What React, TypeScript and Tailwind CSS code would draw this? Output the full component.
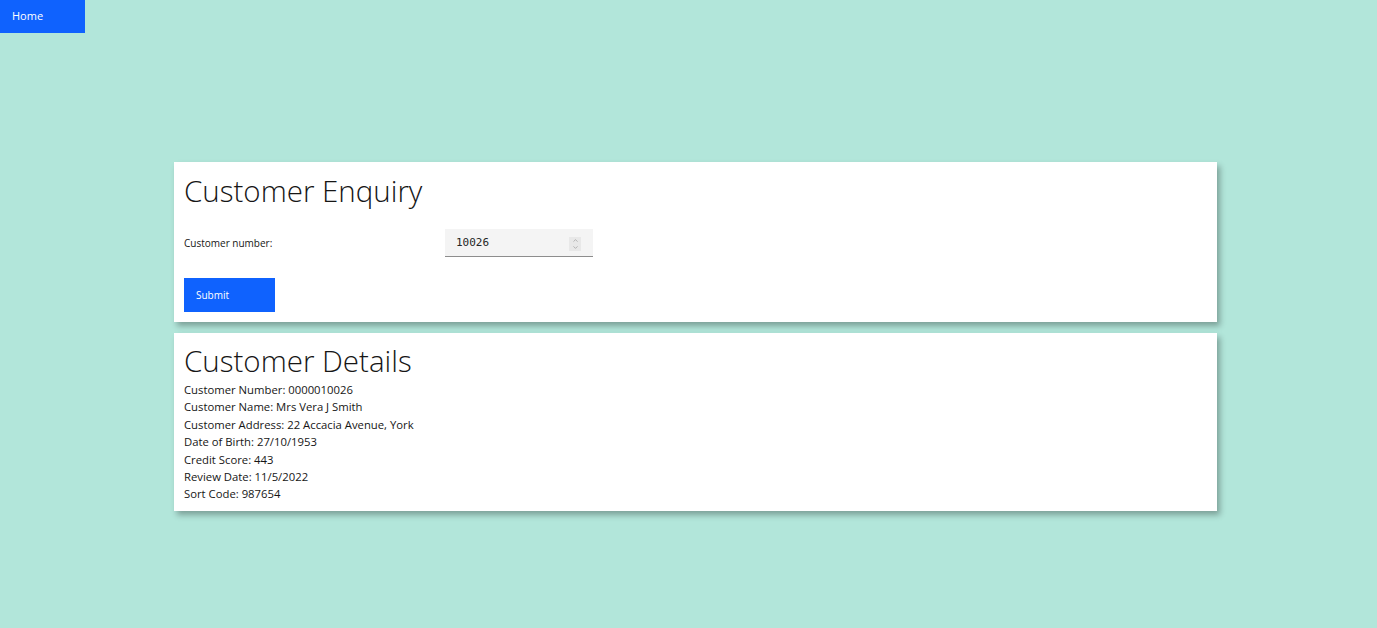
import { ChevronUp, ChevronDown } from 'lucide-react';

const details = [
  ['Customer Number', '0000010026'],
  ['Customer Name', 'Mrs Vera J Smith'],
  ['Customer Address', '22 Accacia Avenue, York'],
  ['Date of Birth', '27/10/1953'],
  ['Credit Score', '443'],
  ['Review Date', '11/5/2022'],
  ['Sort Code', '987654'],
];

export default function App() {
  return (
    <div className="min-h-[628px] bg-[#b2e6da] font-['Open_Sans',sans-serif] text-[#161616]">
      {/* top nav */}
      <div className="flex">
        <button className="h-[33px] w-[85px] bg-[#0f62fe] pl-[12px] text-left text-[11px] text-white">Home</button>
      </div>

      <div className="ml-[174px] mt-[129px] flex w-[1043px] flex-col gap-[11px]">
        {/* Customer Enquiry */}
        <div className="h-[160px] bg-white px-[10px] pt-[9px] shadow-[3px_4px_6px_rgba(0,0,0,0.3)]">
          <h1 className="text-[29.5px] font-light leading-[40px]">Customer Enquiry</h1>
          <div className="mt-[18px] flex items-center">
            <label className="w-[261px] text-[10px]">Customer number:</label>
            <div className="flex h-[28px] w-[148px] items-center justify-between border-b border-[#8d8d8d] bg-[#f4f4f4] pl-[11px] pr-[12px] pt-[2px]">
              <span className="font-['DejaVu_Sans_Mono',monospace] text-[11px] text-[#262626]">10026</span>
              <div className="flex h-[14px] w-[12px] flex-col items-center justify-center bg-[#e8e8e8] text-[#8d8d8d]">
                <ChevronUp size={7} strokeWidth={2} />
                <ChevronDown size={7} strokeWidth={2} />
              </div>
            </div>
          </div>
          <button className="mt-[21px] h-[34px] w-[91px] bg-[#0f62fe] pl-[12px] text-left text-[10px] text-white">Submit</button>
        </div>

        {/* Customer Details */}
        <div className="h-[178px] bg-white px-[10px] pt-[8px] shadow-[3px_4px_6px_rgba(0,0,0,0.3)]">
          <h1 className="text-[29.5px] font-light leading-[40px]">Customer Details</h1>
          <div className="flex flex-col">
            {details.map(([k, v]) => (
              <div key={k} className="text-[11.3px] leading-[17.4px] text-[#161616]">
                {k}: {v}
              </div>
            ))}
          </div>
        </div>
      </div>
    </div>
  );
}
